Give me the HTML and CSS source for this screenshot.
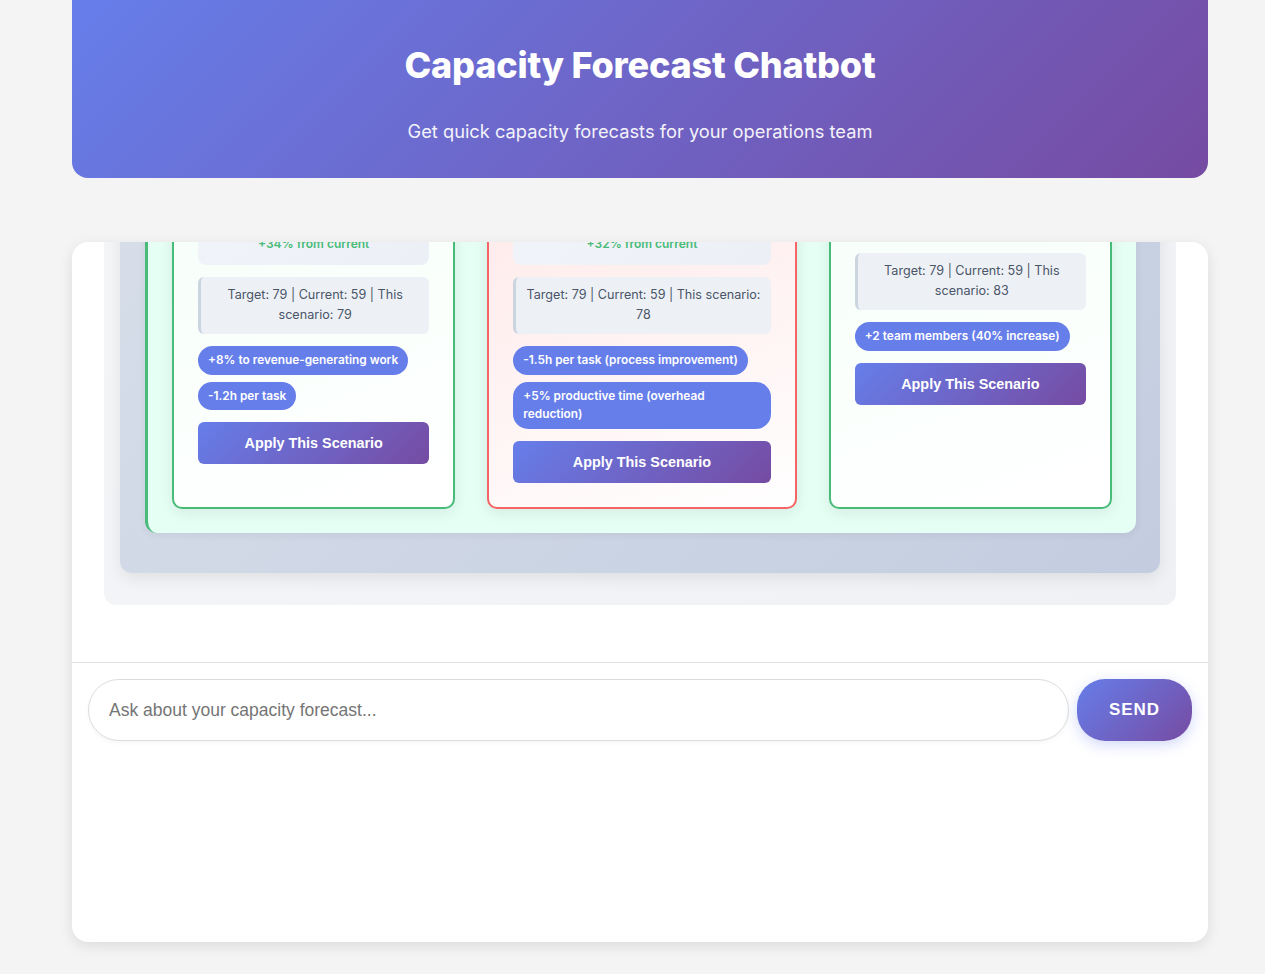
FILE: index.html
```html
<!DOCTYPE html>
<html lang="en">
<head>
<meta charset="utf-8">
<title>Capacity Forecast Chatbot</title>
<link rel="stylesheet" href="styles.css">
</head>
<body>
<div class="app">
  <header class="hero">
    <h1 class="hero-title">Capacity Forecast Chatbot</h1>
    <p class="hero-sub">Get quick capacity forecasts for your operations team</p>
  </header>

  <main class="chat">
    <div class="messages">
      <div class="message bot">
        <p class="msg-text">Here are three scenarios that would close the capacity gap for your operations team.</p>
        <div class="panel">
          <div class="panel-title">Scenario Comparison</div>
          <div class="result">
            <div class="scenarios">
              <div class="scenario good">
                <h4 class="scenario-name">Scenario 1: Optimize Work Mix &amp; Efficiency</h4>
                <div class="metric">
                  <div class="metric-value">79 tasks / week</div>
                  <div class="metric-change">+34% from current</div>
                </div>
                <div class="compare">Target: 79 | Current: 59 | This scenario: 79</div>
                <div class="tags">
                  <span class="tag">+8% to revenue-generating work</span>
                  <span class="tag">-1.2h per task</span>
                </div>
                <button class="apply-btn">Apply This Scenario</button>
              </div>

              <div class="scenario warn">
                <h4 class="scenario-name">Scenario 2: Process Improvement &amp; Overhead Cut</h4>
                <div class="metric">
                  <div class="metric-value">78 tasks / week</div>
                  <div class="metric-change">+32% from current</div>
                </div>
                <div class="compare">Target: 79 | Current: 59 | This scenario: 78</div>
                <div class="tags">
                  <span class="tag">-1.5h per task (process improvement)</span>
                  <span class="tag">+5% productive time (overhead reduction)</span>
                </div>
                <button class="apply-btn">Apply This Scenario</button>
              </div>

              <div class="scenario good">
                <h4 class="scenario-name">Scenario 3: Add Headcount</h4>
                <div class="metric">
                  <div class="metric-value">83 tasks / week</div>
                  <div class="metric-change">+41% from current</div>
                </div>
                <div class="compare">Target: 79 | Current: 59 | This scenario: 83</div>
                <div class="tags">
                  <span class="tag">+2 team members (40% increase)</span>
                </div>
                <button class="apply-btn">Apply This Scenario</button>
              </div>
            </div>
          </div>
        </div>
      </div>
    </div>

    <div class="composer">
      <input class="composer-input" type="text" placeholder="Ask about your capacity forecast...">
      <button class="send-btn">Send</button>
    </div>
  </main>
</div>
</body>
</html>
```

FILE: styles.css
```css
* {
  box-sizing: border-box;
}

html, body {
  margin: 0;
  padding: 0;
}

body {
  background: #f4f4f4;
  font-family: Inter, "Noto Sans", "DejaVu Sans", sans-serif;
  color: #2d3748;
}

.app {
  width: 1136px;
  margin: 0 0 0 72px;
  padding-bottom: 32px;
}

/* ---------- header ---------- */
.hero {
  height: 178px;
  padding: 43px 20px 36px;
  background: linear-gradient(135deg, #667eea 0%, #764ba2 100%);
  border-radius: 0 0 16px 16px;
  text-align: center;
  color: #ffffff;
}

.hero-title {
  margin: 0 0 33px;
  font-size: 36px;
  line-height: 44px;
  font-weight: 800;
  letter-spacing: -0.2px;
}

.hero-sub {
  margin: 0;
  font-size: 18.3px;
  line-height: 22px;
  opacity: 0.92;
}

/* ---------- chat container ---------- */
.chat {
  margin-top: 64px;
  height: 700px;
  background: #ffffff;
  border-radius: 16px;
  box-shadow: 0 4px 14px rgba(0, 0, 0, 0.1);
  overflow: hidden;
  display: flex;
  flex-direction: column;
}

.messages {
  height: 420px;
  flex: none;
  overflow: hidden;
  display: flex;
  flex-direction: column;
  justify-content: flex-end;
  padding: 24px 32px 57px;
}

.message {
  flex: none;
  background: linear-gradient(135deg, #f5f6f8 0%, #eff1f4 100%);
  border-radius: 12px;
  padding: 16px 16px 32px;
}

.msg-text {
  margin: 0 0 12px;
  font-size: 15px;
  line-height: 1.6;
  color: #2d3748;
}

.panel {
  background: linear-gradient(135deg, #d9e0eb 0%, #c3cddf 100%);
  border-radius: 12px;
  padding: 24px 24px 40px 25px;
  box-shadow: 0 6px 16px rgba(0, 0, 0, 0.08);
}

.panel-title {
  font-size: 16px;
  font-weight: 700;
  margin-bottom: 12px;
  color: #2d3748;
}

.result {
  background: #e6fff4;
  border-left: 3px solid #48bb78;
  border-radius: 12px;
  padding: 24px;
  box-shadow: 0 2px 8px rgba(0, 0, 0, 0.06);
}

.scenarios {
  display: grid;
  grid-template-columns: 283fr 309fr 283fr;
  gap: 32px;
}

.scenario {
  display: flex;
  flex-direction: column;
  gap: 12px;
  padding: 24px;
  border-radius: 10px;
  border: 2px solid #48bb78;
  background: linear-gradient(160deg, #f4fff8 0%, #ffffff 100%);
  box-shadow: 0 4px 14px rgba(0, 0, 0, 0.08);
}

.scenario.warn {
  border-color: #f56565;
  background: linear-gradient(160deg, #ffe6e6 0%, #fff6f6 70%, #ffffff 100%);
}

.scenario-name {
  margin: 0;
  font-size: 15px;
  line-height: 24px;
  font-weight: 700;
  color: #2d3748;
}

.metric {
  background: linear-gradient(135deg, #f1f4f9 0%, #eceff5 100%);
  border-radius: 8px;
  padding: 12px;
  text-align: center;
}

.metric-value {
  font-size: 24px;
  line-height: 30px;
  font-weight: 700;
  color: #2d3748;
}

.metric-change {
  margin-top: 4px;
  font-size: 12px;
  line-height: 18px;
  font-weight: 600;
  color: #48bb78;
}

.compare {
  background: #edf1f6;
  border-left: 3px solid #cbd5e0;
  border-radius: 6px;
  padding: 8px 10px;
  font-size: 12.6px;
  line-height: 20.8px;
  text-align: center;
  color: #4a5568;
}

.tags {
  display: flex;
  flex-wrap: wrap;
  align-items: flex-start;
  gap: 7px 6px;
}

.tag {
  display: inline-block;
  background: #667eea;
  color: #ffffff;
  font-size: 11.85px;
  font-weight: 600;
  line-height: 18.6px;
  padding: 5px 10px;
  border-radius: 15px;
}

.apply-btn {
  display: block;
  width: 100%;
  border: none;
  border-radius: 6px;
  padding: 12px 16px;
  background: linear-gradient(135deg, #667eea 0%, #764ba2 100%);
  color: #ffffff;
  font-family: "Liberation Sans", Arial, sans-serif;
  font-size: 14.4px;
  line-height: 18px;
  font-weight: 700;
  cursor: pointer;
}

/* ---------- composer ---------- */
.composer {
  flex: 1;
  display: flex;
  align-items: flex-start;
  gap: 8px;
  padding: 16px;
  border-top: 1px solid #e2e2e2;
}

.composer-input {
  flex: 1;
  height: 62px;
  border: 1px solid #dddddd;
  border-radius: 31px;
  padding: 0 20px;
  font-family: "Liberation Sans", Arial, sans-serif;
  font-size: 17.5px;
  color: #333333;
  background: #ffffff;
  box-shadow: 0 2px 4px rgba(0, 0, 0, 0.04);
  outline: none;
}

.composer-input::placeholder {
  color: #757575;
}

.send-btn {
  width: 115px;
  height: 62px;
  border: none;
  border-radius: 28px;
  background: linear-gradient(135deg, #667eea 0%, #764ba2 100%);
  color: #ffffff;
  font-family: "Liberation Sans", Arial, sans-serif;
  font-size: 17px;
  font-weight: 700;
  letter-spacing: 1px;
  text-transform: uppercase;
  box-shadow: 0 4px 14px rgba(102, 126, 234, 0.3);
  cursor: pointer;
}
```
